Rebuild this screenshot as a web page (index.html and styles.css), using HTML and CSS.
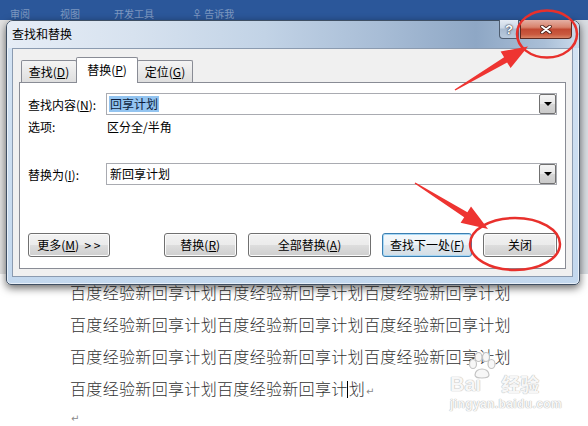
FILE: index.html
```html
<!DOCTYPE html>
<html lang="zh-CN">
<head>
<meta charset="utf-8">
<title>查找和替换</title>
<link rel="stylesheet" href="styles.css">
</head>
<body>
<div class="ribbon">
  <span class="rb-item rb-1">审阅</span>
  <span class="rb-item rb-2">视图</span>
  <span class="rb-item rb-3">开发工具</span>
  <span class="rb-item rb-4">♀ 告诉我</span>
</div>
<div class="toolbar"></div>
<div class="doc">
  <p class="line">百度经验新回享计划百度经验新回享计划百度经验新回享计划</p>
  <p class="line">百度经验新回享计划百度经验新回享计划百度经验新回享计划</p>
  <p class="line">百度经验新回享计划百度经验新回享计划百度经验新回享计划</p>
  <p class="line">百度经验新回享计划百度经验新回享计<span class="caret"></span>划<span class="ret">↵</span></p>
  <p class="line last"><span class="ret">↵</span></p>
</div>

<div class="watermark">
  <div class="wm-top">
    <span class="wm-bai">Bai</span>
    <svg class="wm-paw" width="30" height="28" viewBox="0 0 30 28">
      <g fill="#f7f7f7" stroke="#c4c4c4" stroke-width="1.2">
        <ellipse cx="6" cy="12" rx="3.5" ry="4.5"/>
        <ellipse cx="11.5" cy="5" rx="3.5" ry="4.5"/>
        <ellipse cx="19" cy="5" rx="3.5" ry="4.5"/>
        <ellipse cx="24.5" cy="12" rx="3.5" ry="4.5"/>
        <path d="M8 23 C8 15 22 15 22 23 C22 27 8 27 8 23 Z"/>
      </g>
    </svg>
    <span class="wm-jy">经验</span>
  </div>
  <div class="wm-url">jingyan.baidu.com</div>
</div>

<div class="dialog">
  <div class="titlebar">
    <span class="title">查找和替换</span>
    <div class="controls">
      <div class="cbtn help">?</div>
      <div class="cbtn close">
        <svg width="12" height="9" viewBox="0 0 12 9"><path d="M2 1.5 L10 7.5 M10 1.5 L2 7.5" stroke="#4a2018" stroke-width="3.6" stroke-linecap="round"/><path d="M2 1.5 L10 7.5 M10 1.5 L2 7.5" stroke="#fff" stroke-width="2" stroke-linecap="round"/></svg>
      </div>
    </div>
  </div>
  <div class="client">
    <div class="tabs">
      <div class="tab">查找(<u>D</u>)</div>
      <div class="tab active">替换(<u>P</u>)</div>
      <div class="tab">定位(<u>G</u>)</div>
    </div>
    <div class="panel">
      <div class="row">
        <span class="label">查找内容(<u>N</u>):</span>
        <div class="combo"><span class="sel">回享计划</span><span class="drop"><i class="tri"></i></span></div>
      </div>
      <div class="row opt">
        <span class="label">选项:</span>
        <span class="optval">区分全/半角</span>
      </div>
      <div class="row rep">
        <span class="label">替换为(<u>I</u>):</span>
        <div class="combo"><span class="val">新回享计划</span><span class="drop"><i class="tri"></i></span></div>
      </div>
      <div class="buttons">
        <div class="btn w-more">更多(<u>M</u>)&nbsp;&nbsp;&gt; &gt;</div>
        <div class="btn w-rep">替换(<u>R</u>)</div>
        <div class="btn w-all">全部替换(<u>A</u>)</div>
        <div class="btn w-next focus">查找下一处(<u>F</u>)</div>
        <div class="btn w-close">关闭</div>
      </div>
    </div>
  </div>
</div>

<svg class="annot" width="588" height="426" viewBox="0 0 588 426">
  <ellipse cx="547" cy="34" rx="30" ry="23.5" fill="none" stroke="#e8302c" stroke-width="2.5"/>
  <polygon points="454.6,89.4 504.1,57.2 500.6,51.6 528,46.5 510.6,68 507.1,62.4 455.4,90.6" fill="#ee3431"/>
  <ellipse cx="515" cy="244" rx="45" ry="26" fill="none" stroke="#e8302c" stroke-width="2.5"/>
  <polygon points="414.6,183.6 464.2,217.3 460.6,222.8 488,229 471,206.6 467.4,212.2 415.4,182.4" fill="#ee3431"/>
</svg>
</body>
</html>
```
FILE: styles.css
```css
* { box-sizing: border-box; margin: 0; padding: 0; }
body {
  width: 588px;
  height: 426px;
  overflow: hidden;
  position: relative;
  background: #fff;
  font-family: "Noto Sans CJK SC", "Noto Sans", "DejaVu Sans", sans-serif;
  color: #000;
}
u { text-decoration: underline; text-underline-offset: 1px; }

/* Word background */
.ribbon {
  height: 20px;
  background: #2b579a;
  display: flex;
  align-items: flex-start;
  white-space: nowrap;
}
.rb-item {
  color: rgba(255, 255, 255, 0.4);
  font-size: 10px;
  line-height: 11px;
  margin-top: 8px;
}
.rb-1 { margin-left: 10px; }
.rb-2 { margin-left: 30px; }
.rb-3 { margin-left: 34px; }
.rb-4 { margin-left: 38px; }
.toolbar {
  height: 254px;
  background: linear-gradient(90deg, #e3e3e3 0, #e3e3e3 10px, #f3f3f3 10px, #f3f3f3 576px, #d9dde2 576px);
}
.doc {
  padding: 2px 0 0 70px;
  font-size: 16px;
  font-weight: 300;
  line-height: 32px;
  letter-spacing: 0.33px;
  color: #333;
}
.line { white-space: nowrap; }
.line.last {
  font-family: "DejaVu Sans", sans-serif;
  font-size: 10px;
  line-height: 12px;
  margin-top: 5px;
  letter-spacing: 0;
}
.caret {
  display: inline-block;
  width: 1px;
  height: 17px;
  background: #000;
  vertical-align: -3px;
  margin: 0 1px 0 -1px;
}
.ret {
  font-family: "DejaVu Sans", sans-serif;
  font-size: 10px;
  font-weight: normal;
  color: #8a8a8a;
  margin-left: 1px;
}

.watermark {
  position: absolute;
  left: 450px;
  top: 352px;
  color: #f7f7f7;
  text-shadow: 0 0 1px #b5b5b5, 0 0 1px #b5b5b5;
  font-family: "Liberation Sans", "Noto Sans CJK SC", sans-serif;
}
.wm-top { display: flex; align-items: flex-end; height: 44px; }
.wm-bai { font-size: 20px; font-weight: bold; line-height: 24px; }
.wm-paw { align-self: flex-start; margin-left: -14px; }
.wm-jy { font-family: "Noto Sans CJK SC", sans-serif; font-size: 19px; font-weight: bold; line-height: 24px; margin-left: 4px; }
.wm-url { font-size: 12px; font-weight: bold; line-height: 14px; margin-top: 1px; letter-spacing: 0.4px; }

/* Dialog window */
.dialog {
  position: absolute;
  left: 6px;
  top: 20px;
  width: 574px;
  height: 265px;
  border: 1px solid #3f4f63;
  border-radius: 7px 7px 5px 5px;
  background: linear-gradient(180deg, #d5e4f4 0%, #c3d8ee 100%);
  box-shadow: 0 3px 9px rgba(0, 0, 0, 0.6), inset 0 0 0 1px rgba(255, 255, 255, 0.6);
  display: flex;
  flex-direction: column;
  padding: 0 6px 7px 5px;
}
.titlebar {
  height: 27px;
  margin: 0 -6px 0 -5px;
  padding: 0 6px 0 5px;
  border-radius: 6px 6px 0 0;
  display: flex;
  align-items: flex-start;
  background: linear-gradient(90deg, #e6edf6 0%, #d7e2ef 22%, #c2d3e6 45%, #a8bdd6 65%, #8ea7c5 82%, #aabfd7 94%, #cbdbec 100%);
}
.title {
  font-size: 12px;
  line-height: 26px;
  color: #000;
}
.controls {
  margin-left: auto;
  margin-right: 1px;
  margin-top: -1px;
  display: flex;
  gap: 1px;
}
.cbtn {
  height: 19px;
  display: flex;
  align-items: center;
  justify-content: center;
  border: 1px solid #4e5d70;
  border-top: none;
}
.help {
  width: 20px;
  border-radius: 0 0 0 4px;
  background: linear-gradient(180deg, #e4ebf4 0%, #c9d6e5 45%, #a9bbd0 50%, #b9cadd 100%);
  color: #fff;
  font-family: "Liberation Sans", sans-serif;
  font-weight: bold;
  font-size: 13px;
  text-shadow: 0 0 2px #223, 0 0 1px #223;
}
.close {
  width: 52px;
  border-color: #5c2a22;
  border-radius: 0 0 4px 0;
  background: linear-gradient(180deg, #e4b0a4 0%, #d8826c 40%, #c24a33 52%, #c9593f 80%, #d98466 100%);
}

.client {
  flex: 1;
  border: 1px solid #8b9bb0;
  background: #f0f0f0;
  padding: 8px 6px 7px 6px;
  display: flex;
  flex-direction: column;
}
.tabs {
  height: 25px;
  display: flex;
  align-items: flex-end;
  padding-left: 2px;
}
.tab {
  height: 22px;
  width: 56px;
  border: 1px solid #898c95;
  border-bottom: none;
  border-radius: 2px 2px 0 0;
  background: linear-gradient(180deg, #f4f4f4 0%, #e9e9e9 50%, #dedede 100%);
  font-size: 12px;
  line-height: 21px;
  text-align: center;
  margin-right: -1px;
}
.tab.active {
  height: 26px;
  width: 62px;
  background: #fff;
  position: relative;
  z-index: 1;
  margin-bottom: -1px;
  line-height: 24px;
}
.panel {
  flex: 1;
  border: 1px solid #898c95;
  background: #fff;
  padding: 10px 8px 11px 8px;
  display: flex;
  flex-direction: column;
  font-size: 12px;
}
.row {
  display: flex;
  align-items: center;
  height: 22px;
}
.label { width: 78px; flex: none; white-space: nowrap; }
.combo {
  flex: 1;
  height: 22px;
  border: 1px solid #a9abb1;
  background: #fff;
  display: flex;
  align-items: center;
  padding-left: 2px;
}
.sel {
  background: #93c4f0;
  color: #0c1c3c;
  line-height: 16px;
  padding: 0 1px;
}
.val { line-height: 16px; padding-left: 1px; }
.drop {
  margin-left: auto;
  width: 17px;
  height: 20px;
  border: 1px solid #707070;
  border-radius: 2px;
  background: linear-gradient(180deg, #f6f6f6 0%, #e8e8e8 50%, #d7d7d7 51%, #cacaca 100%);
  display: flex;
  align-items: center;
  justify-content: center;
}
.tri {
  display: block;
  width: 0;
  height: 0;
  border-left: 4px solid transparent;
  border-right: 4px solid transparent;
  border-top: 4px solid #000;
}
.row.opt { margin-top: 3px; height: 18px; line-height: 18px; }
.optval { padding-left: 1px; }
.row.rep { margin-top: 27px; }

.buttons {
  margin-top: auto;
  display: flex;
  gap: 11px;
  height: 24px;
}
.btn {
  height: 24px;
  border: 1px solid #707070;
  border-radius: 3px;
  background: linear-gradient(180deg, #f2f2f2 0%, #ebebeb 50%, #dddddd 51%, #cfcfcf 100%);
  box-shadow: inset 0 0 0 1px #fbfbfb;
  font-size: 12px;
  line-height: 22px;
  text-align: center;
  white-space: nowrap;
}
.w-more { width: 82px; margin-right: 43px; }
.w-rep { width: 73px; }
.w-all { width: 124px; }
.w-next { width: 90px; }
.w-close { width: 74px; }
.btn.focus {
  border-color: #3c7fb1;
  box-shadow: inset 0 0 0 1px #a7d8f6;
  background: linear-gradient(180deg, #f4f9fc 0%, #edf3f7 50%, #e0e8ee 51%, #d4dde4 100%);
}

.annot {
  position: absolute;
  left: 0;
  top: 0;
  pointer-events: none;
}
```
